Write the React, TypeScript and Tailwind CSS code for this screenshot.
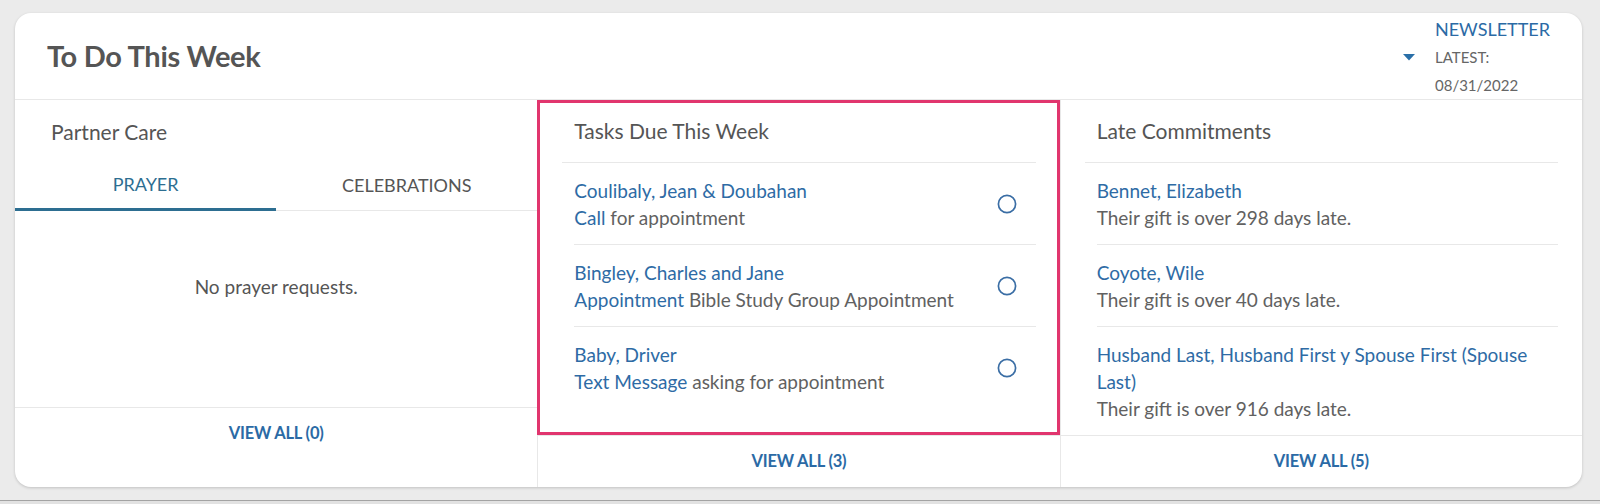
import React from "react";

const tasks = [
  { name: "Coulibaly, Jean & Doubahan", kind: "Call", note: "for appointment" },
  { name: "Bingley, Charles and Jane", kind: "Appointment", note: "Bible Study Group Appointment" },
  { name: "Baby, Driver", kind: "Text Message", note: "asking for appointment" },
];

const late = [
  { name: "Bennet, Elizabeth", days: 298 },
  { name: "Coyote, Wile", days: 40 },
  { name: "Husband Last, Husband First y Spouse First (Spouse Last)", days: 916 },
];

const ViewAll = ({ count }: { count: number }) => (
  <div className="h-[52px] border-t border-[#e8e8e8] flex items-center justify-center">
    <a className="text-[16.5px] font-bold text-[#2b6aa5] tracking-[-0.2px] cursor-pointer">
      VIEW ALL ({count})
    </a>
  </div>
);

const ColumnTitle = ({ children }: { children: React.ReactNode }) => (
  <div className="mx-6 px-3 h-[63px] border-b border-[#e8e8e8] flex items-center text-[21px] leading-7 text-[#555]">
    {children}
  </div>
);

export default function App() {
  return (
    <div
      className="h-[504px] bg-[#ebebeb] flex flex-col overflow-hidden"
      style={{ fontFamily: "Lato, 'Open Sans', sans-serif" }}
    >
      <div className="h-[500px] pt-[13px]">
        <div className="ml-[15px] mr-[18px] bg-white rounded-[16px] shadow-[0_1px_3px_rgba(0,0,0,0.18)] overflow-hidden">
          {/* header */}
          <div className="h-[87px] border-b border-[#e8e8e8] flex items-center justify-between pl-8 pr-8">
            <h2 className="text-[29px] font-bold text-[#555] tracking-[-0.3px]">To Do This Week</h2>
            <div className="self-start pt-[2px] flex items-center gap-5">
              <svg width="12" height="7" viewBox="0 0 12 7" className="mt-[1px]">
                <path d="M0 0 L12 0 L6 6.5 Z" fill="#2a6fa8" />
              </svg>
              <div className="leading-7">
                <div className="text-[18px] text-[#2b6aa5]">NEWSLETTER</div>
                <div className="text-[15px] text-[#666]">LATEST:</div>
                <div className="text-[15px] text-[#666]">08/31/2022</div>
              </div>
            </div>
          </div>

          {/* columns */}
          <div className="grid grid-cols-3">
            {/* Partner Care */}
            <div>
              <div className="h-[63px] pl-9 flex items-center text-[21px] leading-7 text-[#555]">
                Partner Care
              </div>
              <div className="flex border-b border-[#e8e8e8]">
                <button className="flex-1 h-[48px] -mb-px pb-[2px] border-b-[3px] border-[#2d6e91] text-[18px] text-[#2d6e91]">
                  PRAYER
                </button>
                <button className="flex-1 h-[47px] pb-[2px] text-[18px] text-[#555]">
                  CELEBRATIONS
                </button>
              </div>
              <div className="h-[196px] pt-[62px] text-center text-[19px] leading-[27px] text-[#555]">
                No prayer requests.
              </div>
              <ViewAll count={0} />
            </div>

            {/* Tasks Due This Week */}
            <div className="border-l border-[#e8e8e8]">
              <div className="relative">
                <ColumnTitle>Tasks Due This Week</ColumnTitle>
                <ul className="mx-6 pb-[27px]">
                  {tasks.map((t, i) => (
                    <li
                      key={t.name}
                      className={`ml-3 pt-[14px] pb-[13px] flex items-center justify-between text-[19px] leading-[27px] ${
                        i < tasks.length - 1 ? "border-b border-[#e8e8e8]" : ""
                      }`}
                    >
                      <div>
                        <div className="text-[#2e6ba5]">{t.name}</div>
                        <div className="text-[#616161]">
                          <span className="text-[#2e6ba5]">{t.kind}</span> {t.note}
                        </div>
                      </div>
                      <svg width="20" height="20" viewBox="0 0 20 20" className="mr-[19px]">
                        <circle cx="10" cy="10" r="8.6" fill="none" stroke="#3b6ea5" strokeWidth="1.7" />
                      </svg>
                    </li>
                  ))}
                </ul>
                {/* highlight */}
                <div className="absolute top-0 bottom-0 -left-px right-0 border-[3px] border-[#e1356e] pointer-events-none" />
              </div>
              <ViewAll count={3} />
            </div>

            {/* Late Commitments */}
            <div className="border-l border-[#e8e8e8]">
              <ColumnTitle>Late Commitments</ColumnTitle>
              <ul className="mx-6">
                {late.map((l, i) => (
                  <li
                    key={l.name}
                    className={`ml-3 pt-[14px] pb-[13px] text-[19px] leading-[27px] ${
                      i < late.length - 1 ? "border-b border-[#e8e8e8]" : ""
                    }`}
                  >
                    <div className="text-[#2e6ba5]">{l.name}</div>
                    <div className="text-[#616161]">Their gift is over {l.days} days late.</div>
                  </li>
                ))}
              </ul>
              <ViewAll count={5} />
            </div>
          </div>
        </div>
      </div>
      <div className="h-px bg-[#a3a3a3]" />
      <div className="h-[3px] bg-[#e2e2e2]" />
    </div>
  );
}
